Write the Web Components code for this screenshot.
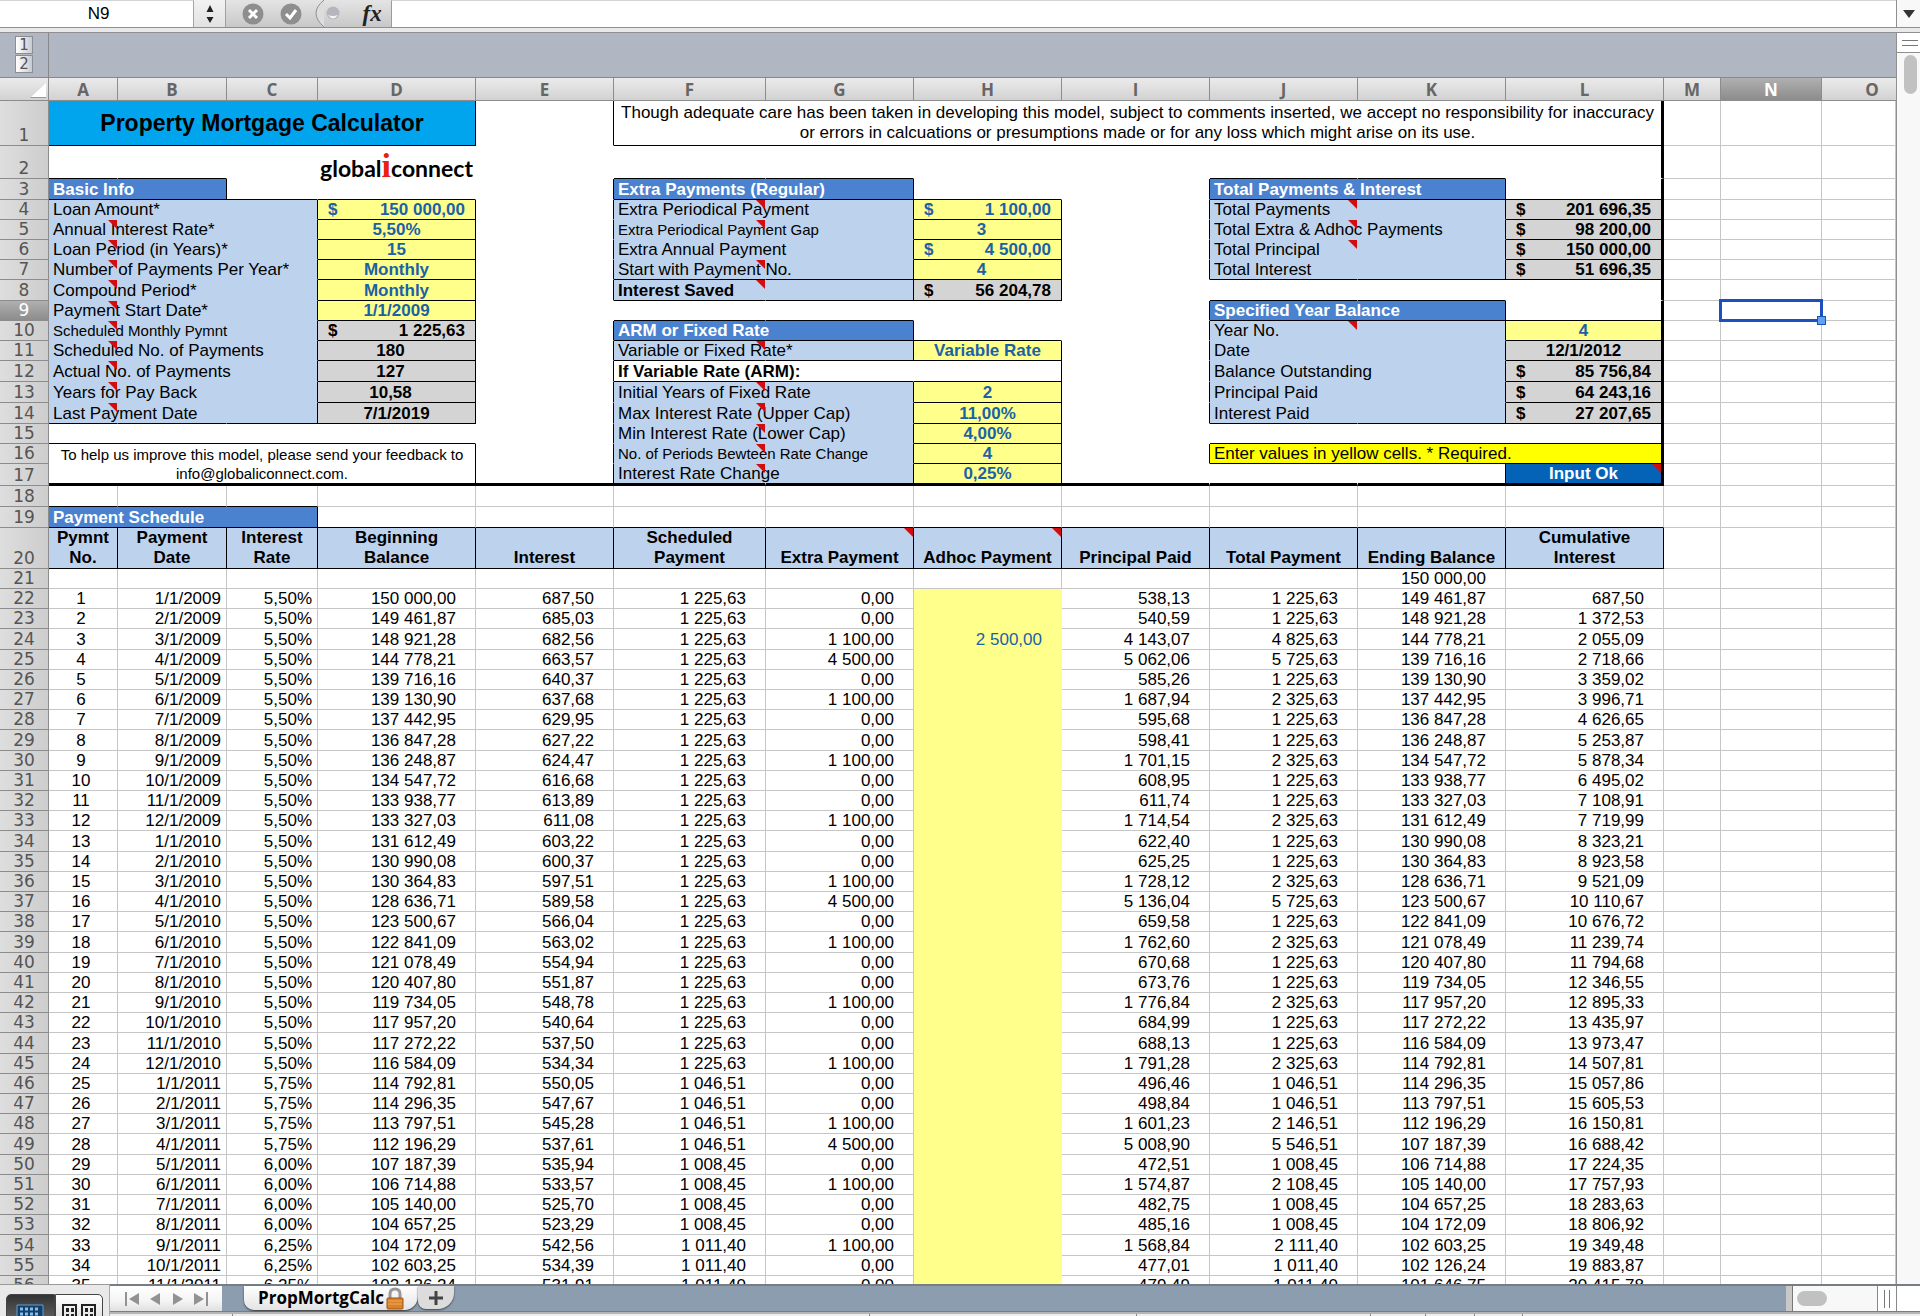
<!DOCTYPE html>
<html lang="en">
<head>
<meta charset="utf-8">
<title>Property Mortgage Calculator</title>
<style>
	body {
		margin: 0;
		font-family: "Liberation Sans", Arial, sans-serif;
		font-size: 17px;
		color: #000;
	}
</style>
</head>
<body>
<sheet-window>
	<formula-bar slot="formula" cell="N9"></formula-bar>
	<outline-strip slot="outline"></outline-strip>
	<mortgage-sheet slot="sheet"></mortgage-sheet>
	<side-scroller slot="scroller"></side-scroller>
	<sheet-footer slot="footer"><span>PropMortgCalc</span></sheet-footer>
</sheet-window>

<script>
function makeTemplate(html) {
	const template = document.createElement('template');
	template.innerHTML = html;
	return template;
}

class BaseElement extends HTMLElement {
	constructor() {
		super();
		this.attachShadow({ mode: 'open' });
		this.shadowRoot.appendChild(this.constructor.template.content.cloneNode(true));
	}
}

// Outer frame: toolbar, sheet with scroller, footer
class SheetWindow extends BaseElement {}
SheetWindow.template = makeTemplate(`
<style>
	:host { display: flex; flex-direction: column; height: 100vh; overflow: hidden; background: #fff; }
	.body { display: flex; flex: 1; min-height: 0; }
	.main { display: flex; flex-direction: column; flex: 1; min-width: 0; overflow: hidden; }
</style>
<slot name="formula"></slot>
<div class="body">
	<div class="main">
		<slot name="outline"></slot>
		<slot name="sheet"></slot>
	</div>
	<slot name="scroller"></slot>
</div>
<slot name="footer"></slot>`);
customElements.define('sheet-window', SheetWindow);

class FormulaBar extends BaseElement {
	connectedCallback() {
		this.shadowRoot.querySelector('.name').value = this.getAttribute('cell');
	}
}
FormulaBar.template = makeTemplate(`
<style>
	:host { display: flex; height: 33px; box-sizing: border-box; border-bottom: 1px solid #8f8f93; background: #e9e9eb; flex: none; }
	.bar { display: flex; flex: 1; height: 28px; box-sizing: border-box; border-bottom: 1px solid #8f8f8f; background: #fff; }
	input { border: 0; border-top: 1px solid #d5d5d5; padding: 0; margin: 0; outline: 0; font: inherit; background: #fff; box-sizing: border-box; }
	.name { width: 194px; padding-left: 4px; text-align: center; border-right: 1px solid #a5a5a5; }
	.formula { flex: 1; min-width: 0; border-left: 1px solid #9b9b9b; }
	button { border: 0; padding: 0; margin: 0; background: none; display: flex; align-items: center; justify-content: center; }
	.step { width: 32px; background: linear-gradient(#f2f2f2, #e2e2e2); border-right: 1px solid #a0a0a0; }
	.tools { display: flex; align-items: center; width: 165px; background: linear-gradient(#e4e4e4, #c8c8c8); }
	.tools button { width: 38px; height: 27px; }
	.tools button:first-child { margin-left: 8px; }
	.drop { width: 24px; border-left: 1px solid #8f8f8f; background: #f8f8f8; }
	.tools .fx { margin-left: 6px; font: italic bold 23px "Liberation Serif", serif; color: #222; }
</style>
<div class="bar">
	<input class="name" aria-label="Name box">
	<button class="step" aria-label="Choose name"><svg width="10" height="20"><path d="M5 1 8.500 8h-7zM5 19l3.500-6h-7z" fill="#222"/></svg></button>
	<div class="tools">
		<button aria-label="Cancel"><svg width="22" height="22"><circle cx="11" cy="11" r="10.500" fill="#8e8e8e"/><path d="m7 7 8 8m0-8-8 8" stroke="#fff" stroke-width="3"/></svg></button>
		<button aria-label="Enter"><svg width="22" height="22"><circle cx="11" cy="11" r="10.500" fill="#8e8e8e"/><path d="m6 11 4 4 6-8" fill="none" stroke="#fff" stroke-width="3"/></svg></button>
		<button aria-label="Formula builder"><svg width="32" height="27"><path d="M12 0q-16 13 0 27" fill="#ddd" stroke="#8e8e8e"/><circle cx="21" cy="13" r="6.500" fill="#b5b5bd"/><path d="M16 15q5 7 10 0-5 2-10 0" fill="#f4f4f4"/></svg></button>
		<button class="fx" aria-label="Insert function">fx</button>
	</div>
	<input class="formula" aria-label="Formula">
	<button class="drop" aria-label="Expand formula bar"><svg width="12" height="8"><path d="M0 0h12L6 8z" fill="#333"/></svg></button>
</div>`);
customElements.define('formula-bar', FormulaBar);

// Strip with the outline level buttons
class OutlineStrip extends BaseElement {}
OutlineStrip.template = makeTemplate(`
<style>
	:host { display: flex; height: 45px; box-sizing: border-box; background: #b1b6c3; border-bottom: 1px solid #88898d; flex: none; }
	.levels { width: 49px; box-sizing: border-box; padding: 3px 15px; border-right: 1px solid #88898d; display: flex; flex-direction: column; gap: 1px; }
	button { height: 18px; padding: 0; border: 1px solid #8a8d94; background: linear-gradient(90deg, #fff, #c8cbd2); color: #555; font: 15px/16px "DejaVu Sans", sans-serif; display: flex; align-items: center; justify-content: center; }
</style>
<div class="levels"><button>1</button><button>2</button></div>`);
customElements.define('outline-strip', OutlineStrip);

class SideScroller extends BaseElement {}
SideScroller.template = makeTemplate(`
<style>
	:host { display: flex; flex-direction: column; width: 24px; box-sizing: border-box; border-left: 1px solid #8f8f8f; background: #f8f8f8; flex: none; }
	.split { height: 20px; box-sizing: border-box; border-bottom: 1px solid #8f8f8f; background: #fff; display: flex; flex-direction: column; justify-content: center; gap: 4px; padding: 0 2px 0 5px; }
	.split i { height: 1px; background: #777; }
	.thumb { width: 13px; height: 39px; margin: 2px 0 0 7px; border-radius: 7px; background: #c1c1c1; }
</style>
<div class="split"><i></i><i></i></div>
<div class="thumb"></div>`);
customElements.define('side-scroller', SideScroller);

class SheetFooter extends BaseElement {}
SheetFooter.template = makeTemplate(`
<style>
	:host { display: flex; height: 32px; flex: none; overflow: hidden; }
	button { border: 0; padding: 0; margin: 0; background: none; display: flex; align-items: center; justify-content: center; }
	.views { display: flex; width: 110px; box-sizing: border-box; padding: 9px 6px 0 6px; background: #e9e9e9; border-top: 1px solid #999; border-right: 1px solid #aaa; }
	.views button { flex: 1; height: 30px; border: 1px solid #444; background: linear-gradient(#fff, #ddd); border-radius: 0 5px 0 0; align-items: flex-start; padding-top: 9px; }
	.views .on { background: linear-gradient(#333, #666); border-radius: 5px 0 0 0; }
	.rest { flex: 1; min-width: 0; display: flex; flex-direction: column; }
	.tabs { height: 28px; box-sizing: border-box; border-top: 2px solid #777d84; border-bottom: 1px solid #777d84; background: #8c9db0; display: flex; }
	.nav { display: flex; width: 112px; background: linear-gradient(#fff, #f4f4f4 60%, #e0e0e0); padding: 0 10px; box-sizing: border-box; }
	.nav button { flex: 1; }
	.tab { margin-left: 22px; width: 174px; height: 24px; background: linear-gradient(#fff, #e4e4e4); border-radius: 0 0 14px 10px; box-shadow: 0 1px 2px #333; color: #000; font: bold 17px/22px "Open Sans", sans-serif; gap: 2px; }
	.add { width: 36px; height: 23px; background: #dcdcdc; border-radius: 0 0 16px 8px; box-shadow: 0 1px 2px #444; }
	.gap { flex: 1; }
	.divider { width: 6px; background: #c8c8c8; border-right: 1px solid #777; }
	.track { width: 84px; background: #f8f8f8; display: flex; align-items: center; }
	.thumb { width: 30px; height: 15px; margin-left: 4px; border-radius: 8px; background: #c1c1c1; }
	.split { width: 20px; background: #fff; border: solid #888; border-width: 0 1px; box-sizing: border-box; display: flex; justify-content: center; align-items: center; gap: 4px; }
	.split i { width: 1px; height: 18px; background: #777; }
	.corner { width: 23px; background: #fff; }
	.status { flex: 1; display: flex; border-top: 2px solid #b5b5b5; background: #eee; }
	.status i { border-right: 1px solid #888; }
</style>
<div class="views">
	<button class="on" aria-label="Normal view"><svg width="28" height="18"><path d="M1 1h26v17H1z" fill="#173f66" stroke="#5aa0dc"/><path d="M4 5h20M4 10h20M4 15h20" stroke="#7dbdf2" stroke-width="3" stroke-dasharray="3 2"/></svg></button>
	<button aria-label="Page layout view"><svg width="36" height="18" fill="none" stroke="#222" stroke-width="2"><path d="M2 1h13v17H2zM21 1h13v17H21z"/><path d="M5 6h8M5 12h8M24 6h8M24 12h8" stroke-width="4" stroke-dasharray="3 2"/></svg></button>
</div>
<div class="rest">
	<div class="tabs">
		<div class="nav">
			<button aria-label="First sheet"><svg width="16" height="14"><path d="M1 0h2v14H1zM15 1v12L5 7z" fill="#929292"/></svg></button>
			<button aria-label="Previous sheet"><svg width="12" height="14"><path d="M11 1v12L1 7z" fill="#929292"/></svg></button>
			<button aria-label="Next sheet"><svg width="12" height="14"><path d="M1 1v12l10-6z" fill="#929292"/></svg></button>
			<button aria-label="Last sheet"><svg width="16" height="14"><path d="M13 0h2v14h-2zM1 1v12l10-6z" fill="#929292"/></svg></button>
		</div>
		<button class="tab"><slot></slot>
			<svg width="18" height="23"><path d="M4 12V7q0-5 5-5t5 5v5" fill="none" stroke="#999" stroke-width="3"/><rect x="1" y="11" width="16" height="11" rx="1" fill="#d9822b" stroke="#9c5512"/><path d="M2 14h14M2 17h14" stroke="#f0a95a"/></svg>
		</button>
		<button class="add" aria-label="Add sheet"><svg width="14" height="14"><path d="M7 0v14M0 7h14" stroke="#444" stroke-width="3"/></svg></button>
		<div class="gap"></div>
		<div class="divider"></div>
		<div class="track"><div class="thumb"></div></div>
		<div class="split"><i></i><i></i></div>
		<div class="corner"></div>
	</div>
	<div class="status"><i style="flex:122"></i><i style="flex:639"></i><i style="flex:266"></i><i style="flex:234"></i><i style="flex:54"></i><i style="flex:49"></i><i style="flex:47"></i><i style="flex:398;border:0"></i></div>
</div>`);
customElements.define('sheet-footer', SheetFooter);

const COLUMNS = 'ABCDEFGHIJKLMNO'.split('');

// Cell classes: r/b = black right/bottom line, R/B = thick right/bottom line
const TOP_ROWS = [
	// 1
	`<td colspan="4" class="title r b">Property Mortgage Calculator</td><td class="r"></td>
	<td colspan="7" class="notice b R">Though adequate care has been taken in developing this model, subject to comments inserted, we accept no responsibility for inaccuracy or errors in calcuations or presumptions made or for any loss which might arise on its use.</td>`,
	// 2
	`<td class="b"></td><td class="b"></td><td></td><td class="logo"><span>global<em>i</em>connect</span></td><td></td>
	<td class="b"></td><td class="b"></td><td></td><td></td><td class="b"></td><td class="b"></td><td class="R"></td>`,
	// 3
	`<td colspan="2" class="head r b">Basic Info</td><td class="b"></td><td class="b"></td><td class="r"></td>
	<td colspan="2" class="head r b">Extra Payments (Regular)</td><td class="b"></td><td class="r"></td>
	<td colspan="2" class="head r b">Total Payments &amp; Interest</td><td class="b R"></td>`,
	// 4
	`<td class="lab">Loan Amount*</td><td class="lab"></td><td class="lab r"></td><td class="in r b"><div class="money"><span>$</span><span>150 000,00</span></div></td><td class="r"></td>
	<td class="lab note">Extra Periodical Payment</td><td class="lab r"></td><td class="in r b"><div class="money"><span>$</span><span>1 100,00</span></div></td><td class="r"></td>
	<td class="lab note">Total Payments</td><td class="lab r"></td><td class="out b R"><div class="money"><span>$</span><span>201 696,35</span></div></td>`,
	// 5
	`<td class="lab note">Annual Interest Rate*</td><td class="lab"></td><td class="lab r"></td><td class="in r b">5,50%</td><td class="r"></td>
	<td class="lab note small">Extra Periodical Payment Gap</td><td class="lab r"></td><td class="in acct r b">3</td><td class="r"></td>
	<td class="lab note">Total Extra &amp; Adhoc Payments</td><td class="lab r"></td><td class="out b R"><div class="money"><span>$</span><span>98 200,00</span></div></td>`,
	// 6
	`<td class="lab note">Loan Period (in Years)*</td><td class="lab"></td><td class="lab r"></td><td class="in r b">15</td><td class="r"></td>
	<td class="lab">Extra Annual Payment</td><td class="lab r"></td><td class="in r b"><div class="money"><span>$</span><span>4 500,00</span></div></td><td class="r"></td>
	<td class="lab note">Total Principal</td><td class="lab r"></td><td class="out b R"><div class="money"><span>$</span><span>150 000,00</span></div></td>`,
	// 7
	`<td class="lab note">Number of Payments Per Year*</td><td class="lab"></td><td class="lab r"></td><td class="in r b">Monthly</td><td class="r"></td>
	<td class="lab note b">Start with Payment No.</td><td class="lab r b"></td><td class="in acct r b">4</td><td class="r"></td>
	<td class="lab b">Total Interest</td><td class="lab r b"></td><td class="out b R"><div class="money"><span>$</span><span>51 696,35</span></div></td>`,
	// 8
	`<td class="lab note">Compound Period*</td><td class="lab"></td><td class="lab r"></td><td class="in r b">Monthly</td><td class="r"></td>
	<td class="lab note strong b">Interest Saved</td><td class="lab r b"></td><td class="out r b"><div class="money"><span>$</span><span>56 204,78</span></div></td><td></td>
	<td class="b"></td><td class="b"></td><td class="R"></td>`,
	// 9
	`<td class="lab note">Payment Start Date*</td><td class="lab"></td><td class="lab r"></td><td class="in r b">1/1/2009</td><td></td>
	<td class="b"></td><td class="b"></td><td></td><td class="r"></td>
	<td colspan="2" class="head r b">Specified Year Balance</td><td class="b R"></td>`,
	// 10
	`<td class="lab note small">Scheduled Monthly Pymnt</td><td class="lab"></td><td class="lab r"></td><td class="out r b"><div class="money"><span>$</span><span>1 225,63</span></div></td><td class="r"></td>
	<td colspan="2" class="head r b">ARM or Fixed Rate</td><td class="b"></td><td class="r"></td>
	<td class="lab note">Year No.</td><td class="lab r"></td><td class="in b R">4</td>`,
	// 11
	`<td class="lab note">Scheduled No. of Payments</td><td class="lab"></td><td class="lab r"></td><td class="out acct r b">180</td><td class="r"></td>
	<td class="lab note b">Variable or Fixed Rate*</td><td class="lab r b"></td><td class="in r b">Variable Rate</td><td class="r"></td>
	<td class="lab">Date</td><td class="lab r"></td><td class="out b R">12/1/2012</td>`,
	// 12
	`<td class="lab note">Actual No. of Payments</td><td class="lab"></td><td class="lab r"></td><td class="out acct r b">127</td><td class="r"></td>
	<td colspan="2" class="cond b">If Variable Rate (ARM):</td><td class="r b"></td><td class="r"></td>
	<td class="lab">Balance Outstanding</td><td class="lab r"></td><td class="out b R"><div class="money"><span>$</span><span>85 756,84</span></div></td>`,
	// 13
	`<td class="lab note">Years for Pay Back</td><td class="lab"></td><td class="lab r"></td><td class="out acct r b">10,58</td><td class="r"></td>
	<td class="lab note">Initial Years of Fixed Rate</td><td class="lab r"></td><td class="in r b">2</td><td class="r"></td>
	<td class="lab">Principal Paid</td><td class="lab r"></td><td class="out b R"><div class="money"><span>$</span><span>64 243,16</span></div></td>`,
	// 14
	`<td class="lab note b">Last Payment Date</td><td class="lab b"></td><td class="lab r b"></td><td class="out r b">7/1/2019</td><td class="r"></td>
	<td class="lab note">Max Interest Rate (Upper Cap)</td><td class="lab r"></td><td class="in r b">11,00%</td><td class="r"></td>
	<td class="lab b">Interest Paid</td><td class="lab r b"></td><td class="out b R"><div class="money"><span>$</span><span>27 207,65</span></div></td>`,
	// 15
	`<td colspan="4" class="b"></td><td class="r"></td>
	<td class="lab note">Min Interest Rate (Lower Cap)</td><td class="lab r"></td><td class="in r b">4,00%</td><td></td>
	<td colspan="3" class="b R"></td>`,
	// 16
	`<td colspan="4" rowspan="2" class="feedback r B">To help us improve this model, please send your feedback to info@globaliconnect.com.</td><td class="r"></td>
	<td class="lab note small">No. of Periods Bewteen Rate Change</td><td class="lab r"></td><td class="in r b">4</td><td class="r"></td>
	<td colspan="3" class="hint b R">Enter values in yellow cells. * Required.</td>`,
	// 17
	`<td class="r B"></td>
	<td class="lab note B">Interest Rate Change</td><td class="lab r B"></td><td class="in r B">0,25%</td><td class="B"></td>
	<td class="B"></td><td class="r B"></td><td class="ok note R B">Input Ok</td>`,
];

const SCHEDULE_HEADS = ['Pymnt<br>No.', 'Payment<br>Date', 'Interest<br>Rate', 'Beginning<br>Balance', 'Interest', 'Scheduled<br>Payment',
	'Extra Payment', 'Adhoc Payment', 'Principal Paid', 'Total Payment', 'Ending Balance', 'Cumulative<br>Interest'];

// rate, interest, scheduled, extra, principal, total, ending balance, cumulative interest
const PAYMENTS = `
5,50%|687,50|1 225,63|0,00|538,13|1 225,63|149 461,87|687,50
5,50%|685,03|1 225,63|0,00|540,59|1 225,63|148 921,28|1 372,53
5,50%|682,56|1 225,63|1 100,00|4 143,07|4 825,63|144 778,21|2 055,09
5,50%|663,57|1 225,63|4 500,00|5 062,06|5 725,63|139 716,16|2 718,66
5,50%|640,37|1 225,63|0,00|585,26|1 225,63|139 130,90|3 359,02
5,50%|637,68|1 225,63|1 100,00|1 687,94|2 325,63|137 442,95|3 996,71
5,50%|629,95|1 225,63|0,00|595,68|1 225,63|136 847,28|4 626,65
5,50%|627,22|1 225,63|0,00|598,41|1 225,63|136 248,87|5 253,87
5,50%|624,47|1 225,63|1 100,00|1 701,15|2 325,63|134 547,72|5 878,34
5,50%|616,68|1 225,63|0,00|608,95|1 225,63|133 938,77|6 495,02
5,50%|613,89|1 225,63|0,00|611,74|1 225,63|133 327,03|7 108,91
5,50%|611,08|1 225,63|1 100,00|1 714,54|2 325,63|131 612,49|7 719,99
5,50%|603,22|1 225,63|0,00|622,40|1 225,63|130 990,08|8 323,21
5,50%|600,37|1 225,63|0,00|625,25|1 225,63|130 364,83|8 923,58
5,50%|597,51|1 225,63|1 100,00|1 728,12|2 325,63|128 636,71|9 521,09
5,50%|589,58|1 225,63|4 500,00|5 136,04|5 725,63|123 500,67|10 110,67
5,50%|566,04|1 225,63|0,00|659,58|1 225,63|122 841,09|10 676,72
5,50%|563,02|1 225,63|1 100,00|1 762,60|2 325,63|121 078,49|11 239,74
5,50%|554,94|1 225,63|0,00|670,68|1 225,63|120 407,80|11 794,68
5,50%|551,87|1 225,63|0,00|673,76|1 225,63|119 734,05|12 346,55
5,50%|548,78|1 225,63|1 100,00|1 776,84|2 325,63|117 957,20|12 895,33
5,50%|540,64|1 225,63|0,00|684,99|1 225,63|117 272,22|13 435,97
5,50%|537,50|1 225,63|0,00|688,13|1 225,63|116 584,09|13 973,47
5,50%|534,34|1 225,63|1 100,00|1 791,28|2 325,63|114 792,81|14 507,81
5,75%|550,05|1 046,51|0,00|496,46|1 046,51|114 296,35|15 057,86
5,75%|547,67|1 046,51|0,00|498,84|1 046,51|113 797,51|15 605,53
5,75%|545,28|1 046,51|1 100,00|1 601,23|2 146,51|112 196,29|16 150,81
5,75%|537,61|1 046,51|4 500,00|5 008,90|5 546,51|107 187,39|16 688,42
6,00%|535,94|1 008,45|0,00|472,51|1 008,45|106 714,88|17 224,35
6,00%|533,57|1 008,45|1 100,00|1 574,87|2 108,45|105 140,00|17 757,93
6,00%|525,70|1 008,45|0,00|482,75|1 008,45|104 657,25|18 283,63
6,00%|523,29|1 008,45|0,00|485,16|1 008,45|104 172,09|18 806,92
6,25%|542,56|1 011,40|1 100,00|1 568,84|2 111,40|102 603,25|19 349,48
6,25%|534,39|1 011,40|0,00|477,01|1 011,40|102 126,24|19 883,87
6,25%|531,91|1 011,40|0,00|479,49|1 011,40|101 646,75|20 415,78`.trim().split('\n').map(line => line.split('|'));

class MortgageSheet extends BaseElement {
	connectedCallback() {
		const table = this.shadowRoot.querySelector('table');
		table.querySelector('thead tr').innerHTML = '<th class="corner"></th>' +
			COLUMNS.map(c => `<th scope="col" class="${c === 'N' ? 'sel' : ''}">${c}</th>`).join('');

		const rows = TOP_ROWS.map(cells => ({ cls: 'top', cells }));
		rows.push({ cells: '<td class="b"></td>'.repeat(3) + '<td></td>'.repeat(9) });
		rows.push({ cells: '<td colspan="3" class="head r b">Payment Schedule</td>' + '<td class="b"></td>'.repeat(9) });
		rows.push({
			cells: SCHEDULE_HEADS.map(h => `<td class="colhead r b${/Extra|Adhoc/.test(h) ? ' note' : ''}">${h}</td>`).join('')
		});
		rows.push({ cls: 'data', cells: '<td></td>'.repeat(10) + '<td>150 000,00</td><td></td>' });

		PAYMENTS.forEach((p, i) => {
			const date = `${i % 12 + 1}/1/${2009 + Math.floor(i / 12)}`;
			const begin = i ? PAYMENTS[i - 1][6] : '150 000,00';
			const values = [i + 1, date, p[0], begin, p[1], p[2], p[3], i === 2 ? '2 500,00' : '', p[4], p[5], p[6], p[7]];
			rows.push({ cls: 'data pay', cells: values.map(v => `<td>${v}</td>`).join('') });
		});

		table.querySelector('tbody').innerHTML = rows.map((row, i) => {
			const n = i + 1;
			const active = n === 9 ? ' class="cursor"' : '';
			return `<tr class="${row.cls || ''}"><th scope="row"${n === 9 ? ' class="sel"' : ''}>${n}</th>${row.cells}` +
				`<td class="free"></td><td class="free"><div${active}></div></td><td class="free"></td></tr>`;
		}).join('');
	}
}
MortgageSheet.template = makeTemplate(`
<style>
	:host { display: block; flex: 1; min-height: 0; overflow: hidden; background: #fff; }
	table { width: 100%; table-layout: fixed; border-collapse: separate; border-spacing: 0; line-height: 19px; }
	col.a { width: 69px; } col.b { width: 109px; } col.c { width: 91px; } col.d { width: 158px; }
	col.e { width: 138px; } col.f { width: 152px; } col.g { width: 148px; } col.m { width: 57px; } col.n { width: 101px; }
	col.num { width: 49px; }

	tr { height: 20px; }
	thead tr { height: 23px; }
	tr:nth-child(5n + 4) { height: 21px; }
	tbody tr.top { height: 20px; }
	tbody tr:nth-child(1) { height: 45px; }
	tbody tr:nth-child(2) { height: 33px; }
	tbody tr:nth-child(3), tbody tr:nth-child(8), tbody tr:nth-child(12), tbody tr:nth-child(13),
	tbody tr:nth-child(14), tbody tr:nth-child(17), tbody tr:nth-child(18) { height: 21px; }
	tbody tr:nth-child(20) { height: 41px; }

	th, td { padding: 0; box-sizing: border-box; border: 0 solid #c6c6c6; border-width: 0 1px 1px 0; white-space: nowrap; vertical-align: bottom; }
	th { font: 17px/19px "DejaVu Sans", sans-serif; color: #555; background: linear-gradient(90deg, #dedede, #cdcdcd); border-color: #8c8c8c; }
	thead th { background: linear-gradient(#ebebeb, #d2d2d2); vertical-align: middle; font: 700 17px/19px "Open Sans", sans-serif; color: #666; }
	thead th:last-child { padding-left: 26px; border-right: 0; }
	th.sel, thead th.sel { background: linear-gradient(#b0b0b0, #8c8c8c); color: #fff; }
	.corner { position: relative; }
	.corner::after { content: ""; position: absolute; right: 2px; bottom: 2px; width: 16px; height: 14px; background: #fff; border-bottom: 1px solid #999; clip-path: polygon(100% 0, 100% 100%, 0 100%); }

	.top td { border-color: #fff; }
	.top td.free { border-color: #c6c6c6; }
	.top .lab { background: #bdd3ed; border-color: #bdd3ed; padding-left: 4px; }
	.small { font-size: 15px; }
	.strong { font-weight: bold; }
	.in, .out { text-align: center; font-weight: bold; }
	.in { background: #ffff8c; color: #1a62a5; }
	.out { background: #d4d4d4; }
	.acct { padding-right: 12px; }
	.money { display: flex; justify-content: space-between; padding: 0 10px; }
	.head { background: #4a82cf; color: #fff; font-weight: bold; padding-left: 4px; }
	.cond { font-weight: bold; padding-left: 4px; }
	.title { background: #00a5ee; font-size: 23px; font-weight: bold; text-align: center; vertical-align: middle; }
	.notice { white-space: normal; text-align: center; vertical-align: top; line-height: 20px; padding: 2px 4px 0; }
	.feedback { white-space: normal; text-align: center; font-size: 15px; padding: 0 4px; }
	.hint { background: #ff0; padding-left: 4px; }
	.ok { background: #0563b7; color: #fff; font-weight: bold; text-align: center; }
	.logo span { display: block; height: 32px; font: 700 23px/44px Lato, sans-serif; text-align: center; }
	.logo em { font: bold 34px/32px "Liberation Serif", serif; color: #e8200f; }
	.colhead { background: #bdd3ed; font-weight: bold; text-align: center; white-space: normal; line-height: 20px; }

	td.r, .top td.r { border-right-color: #000; }
	td.b, .top td.b { border-bottom-color: #000; }
	td.R { border-right: 3px solid #000; }
	td.B { border-bottom: 3px solid #000; }
	.top td.R { border-right-color: #000; }
	.top td.B { border-bottom-color: #000; }

	/* comment marker in the cell's top right corner */
	.note { position: relative; }
	.note::after { content: ""; position: absolute; top: 0; right: 0; width: 9px; height: 9px; background: #d40b0f; clip-path: polygon(0 0, 100% 0, 100% 100%); }

	.data td { text-align: right; padding-right: 19px; }
	.data td:nth-child(2) { text-align: center; padding-right: 4px; }
	.data td:nth-child(3), .data td:nth-child(4) { padding-right: 5px; }
	.pay td:nth-child(9) { background: #ffff8c; border-color: #ffff8c; color: #1a62a5; }

	.free div.cursor { position: absolute; inset: -2px -2px -2px -2px; border: 3px solid #1c4fc0; }
	.free:has(.cursor) { position: relative; }
	.cursor::after { content: ""; position: absolute; right: -6px; bottom: -6px; width: 7px; height: 7px; background: #5fa4ee; border: 1px solid #1c4fc0; }
</style>
<table>
	<colgroup>
		<col class="num"><col class="a"><col class="b"><col class="c"><col class="d"><col class="e"><col class="f"><col class="g">
		<col class="g"><col class="g"><col class="g"><col class="g"><col class="d"><col class="m"><col class="n"><col>
	</colgroup>
	<thead><tr></tr></thead>
	<tbody></tbody>
</table>`);
customElements.define('mortgage-sheet', MortgageSheet);
</script>
</body>
</html>
